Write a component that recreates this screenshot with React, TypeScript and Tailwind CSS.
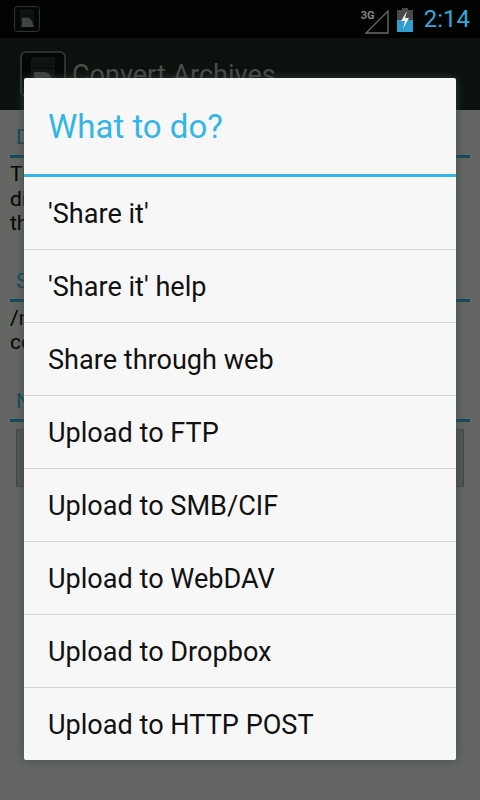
const actions = [
  "'Share it'",
  "'Share it' help",
  "Share through web",
  "Upload to FTP",
  "Upload to SMB/CIF",
  "Upload to WebDAV",
  "Upload to Dropbox",
  "Upload to HTTP POST",
];

function AppGlyph({ size }: { size: number }) {
  return (
    <svg width={size} height={size} viewBox="0 0 46 46" fill="none">
      <rect x="1" y="1" width="44" height="44" rx="5" fill="#0c0e0e" stroke="#8a8c8b" strokeWidth="1.6" />
      <path d="M11 9 Q11 6 14 6 H32 Q35 6 35 9 V38 H11 Z" fill="#2c2e2e" />
      <path d="M12 13 H34 M12 17 H34" stroke="#1a1c1c" strokeWidth="1.5" />
      <path d="M14 37 V21 H25 Q30 22 32 28 L35 37 Z" fill="#a3a5a4" />
    </svg>
  );
}

function Section({ title, children }: { title: string; children?: React.ReactNode }) {
  return (
    <section>
      <h2 className="text-[#33b5e5] text-[21px] leading-[28px] pl-[6px]">{title}</h2>
      <div className="h-[3px] bg-[#33b5e5] mt-[4px]" />
      {children}
    </section>
  );
}

export default function App() {
  return (
    <div className="relative w-[480px] h-[800px] overflow-hidden bg-[#f7f7f7] font-['Roboto',sans-serif]">
      <div className="h-[38px] bg-black flex items-center pl-[14px] pr-[10px]">
        <AppGlyph size={26} />
      </div>
      <div className="h-[72px] bg-[#1c2322] flex items-center pl-[20px] gap-[7px]">
        <AppGlyph size={46} />
        <span className="text-[27px] text-[#b8b8b8] ml-[-1px] mt-[2px]">Convert Archives</span>
      </div>

      <main className="px-[10px] pt-[13px]">
        <Section title="Description">
          <p className="text-[21px] leading-[24.5px] text-black mt-[4px]">
            This tool converts archives to
            <br />
            different formats and keeps
            <br />
            the original files in place
          </p>
        </Section>
        <div className="mt-[31px]">
          <Section title="Saved to">
            <p className="text-[21px] leading-[24.5px] text-black mt-[4px]">
              /mnt/sdcard/archives/
              <br />
              converted
            </p>
          </Section>
        </div>
        <div className="mt-[32px]">
          <Section title="Name">
            <div className="h-[58px] mt-[7px] mx-[6px] bg-[#ccd2cc] border border-[#a9aea9]" />
          </Section>
        </div>
      </main>

      <div className="absolute inset-0 bg-[#000500]/60" />

      <div className="absolute top-0 right-0 h-[38px] flex items-center pr-[10px]">
        <div className="relative w-[26px] h-[30px] mr-[8px]">
          <svg width="26" height="30" viewBox="0 0 26 30" fill="none">
            <path d="M25 7 V29 H3 Z" stroke="#6e6e6e" strokeWidth="1.3" />
          </svg>
          <span className="absolute left-[-2px] top-[6px] text-[11px] leading-[11px] font-bold text-[#858585]">3G</span>
        </div>
        <svg width="16" height="24" viewBox="0 0 16 24" className="mr-[11px] mt-[1px]">
          <rect x="5" y="0" width="6" height="3" fill="#4a4a4a" />
          <rect x="0" y="2" width="16" height="11" fill="#4a4a4a" />
          <rect x="0" y="12" width="16" height="12" fill="#2f9fd0" />
          <path d="M10 3 L4 13 H8 L6 21 L12 10 H8 Z" fill="#f2f2f2" />
        </svg>
        <span className="text-[24px] font-normal text-[#33a9d8] leading-none">2:14</span>
      </div>

      <div className="absolute left-[24px] top-[78px] w-[432px] h-[682px] bg-[#f7f7f7] rounded-[2px] shadow-[0_0_9px_rgba(60,72,62,0.8)]">
        <div className="h-[99px] border-b-[3px] border-[#33b5e5] flex items-center pl-[24px] pt-[2px]">
          <h1 className="text-[33px] text-[#33b5e5]">What to do?</h1>
        </div>
        <ul>
          {actions.map((action, i) => (
            <li
              key={action}
              className={
                i === 0
                  ? "h-[72px] flex items-center pl-[24px] pt-[2px] text-[27.1px] text-[#111111]"
                  : "h-[73px] border-t border-[#d6d6d6] flex items-center pl-[24px] pt-[2px] text-[27.1px] text-[#111111]"
              }
            >
              {action}
            </li>
          ))}
        </ul>
      </div>
    </div>
  );
}
